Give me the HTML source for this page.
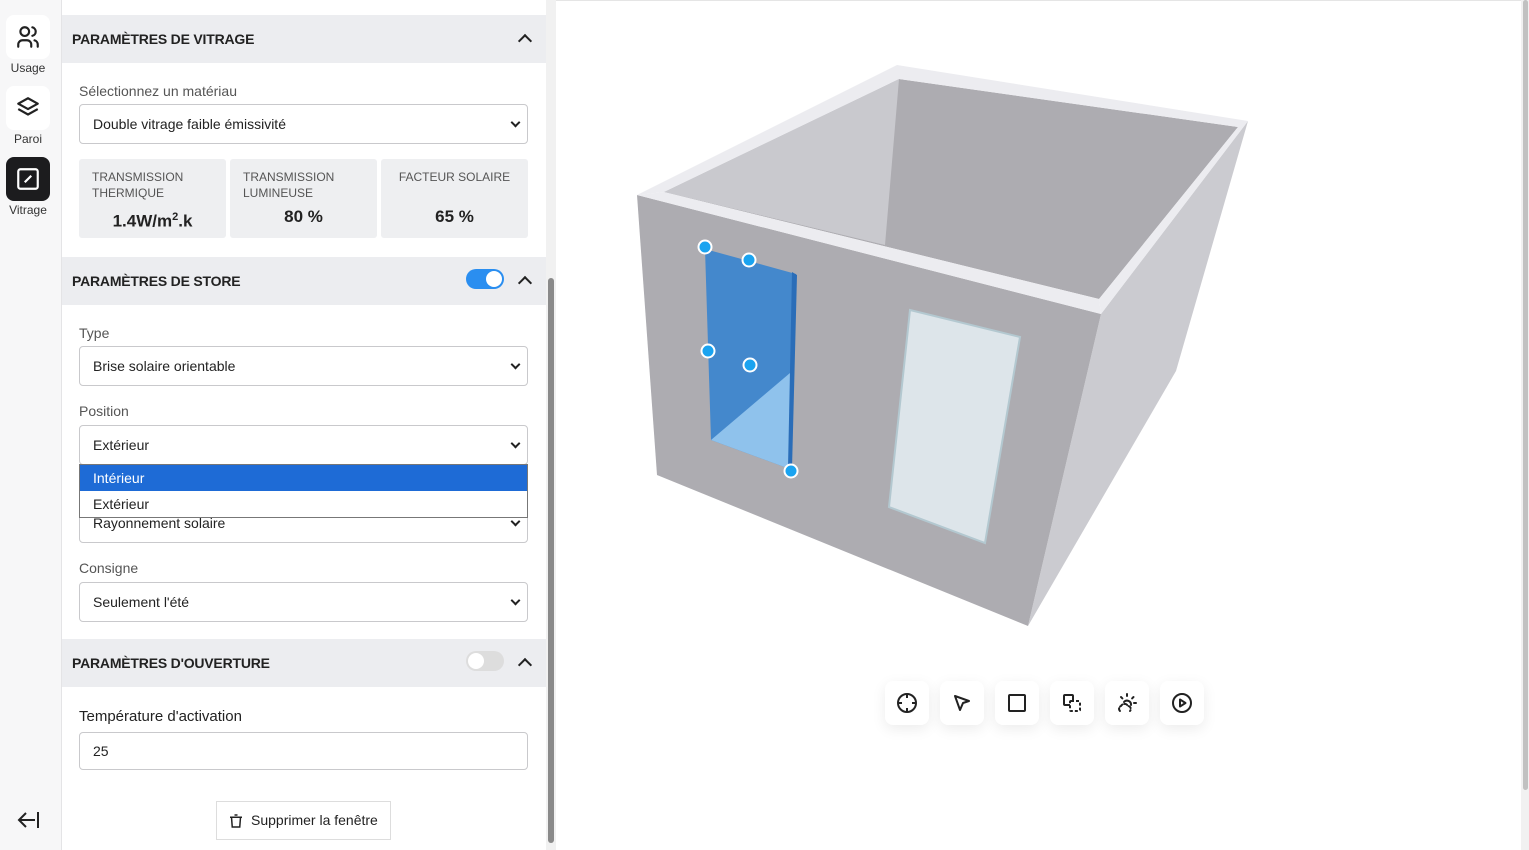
<!DOCTYPE html>
<html><head><meta charset="utf-8"><style>
*{box-sizing:border-box;margin:0;padding:0}
body{width:1529px;height:850px;overflow:hidden;font-family:"Liberation Sans",sans-serif;background:#fff;position:relative;color:#222}
.side{position:absolute;left:0;top:0;width:62px;height:850px;background:#f7f7f8;border-right:1px solid #e4e4e6}
.sb{position:absolute;left:6px;width:44px;height:44px;border-radius:8px;background:#fff;display:flex;align-items:center;justify-content:center}
.sl{position:absolute;width:56px;text-align:center;font-size:12px;color:#333}
.panel{position:absolute;left:62px;top:0;width:484px;height:850px;background:#fff}
.hd{position:absolute;left:0;width:484px;height:48px;background:#ecedf0;font-weight:bold;font-size:14px;padding-left:10px;line-height:48px;color:#222;letter-spacing:-0.2px}
.lbl{position:absolute;left:17px;font-size:14px;color:#555}
.sel,.inp{position:absolute;left:17px;width:449px;height:40px;border:1px solid #c9c9cc;border-radius:4px;font-size:14px;padding-left:13px;line-height:38px;color:#222}
.sel:after{content:"";position:absolute;right:8px;top:14px;width:5px;height:5px;border-right:2px solid #222;border-bottom:2px solid #222;transform:rotate(45deg)}
.card{position:absolute;top:159px;width:147px;height:79px;background:#eeeff1;border-radius:3px;font-size:12px;color:#555;padding:10px 13px;line-height:16px}
.card b{position:absolute;left:0;right:0;top:50px;text-align:center;font-size:17px;color:#222}
.chev{position:absolute;right:16px;width:10px;height:10px;border-left:2px solid #222;border-top:2px solid #222;transform:rotate(45deg)}
.tg{position:absolute;width:38px;height:20px;border-radius:10px}
.tg i{position:absolute;top:2px;width:16px;height:16px;border-radius:50%;background:#fff}
.tool{position:absolute;top:681px;width:44px;height:44px;border-radius:8px;background:#fff;box-shadow:0 4px 14px rgba(0,0,0,.08);display:flex;align-items:center;justify-content:center}
</style></head><body>
<div class="side">
 <div class="sb" style="top:15px"><svg width="26" height="26" viewBox="0 0 24 24" fill="none" stroke="#222" stroke-width="2" stroke-linecap="round"><circle cx="9" cy="7" r="4"/><path d="M3 21v-2a4 4 0 0 1 4-4h4a4 4 0 0 1 4 4v2M16 3.1a4 4 0 0 1 0 7.8M21 21v-2a4 4 0 0 0-3-3.9"/></svg></div>
 <div class="sl" style="top:61px;left:0">Usage</div>
 <div class="sb" style="top:86px"><svg width="26" height="26" viewBox="0 0 24 24" fill="none" stroke="#222" stroke-width="2" stroke-linejoin="round"><path d="M12 3 3 8l9 5 9-5z"/><path d="M3 13l9 5 9-5"/></svg></div>
 <div class="sl" style="top:132px;left:0">Paroi</div>
 <div class="sb" style="top:157px;background:#1c1c1e"><svg width="26" height="26" viewBox="0 0 24 24" fill="none" stroke="#fff" stroke-width="2"><rect x="3" y="3" width="18" height="18" rx="2"/><path d="M9 15l6-6"/></svg></div>
 <div class="sl" style="top:203px;left:0">Vitrage</div>
 <svg style="position:absolute;left:16px;top:809px" width="26" height="22" viewBox="0 0 26 22" fill="none" stroke="#222" stroke-width="2"><path d="M22 3v16M19 11H3M10 4l-7 7 7 7"/></svg>
</div>
<div class="panel">
 <div class="hd" style="top:15px">PARAMÈTRES DE VITRAGE<span class="chev" style="top:21px"></span></div>
 <div class="lbl" style="top:83px">Sélectionnez un matériau</div>
 <div class="sel" style="top:104px">Double vitrage faible émissivité</div>
 <div class="card" style="left:17px">TRANSMISSION<br>THERMIQUE<b>1.4W/m<sup style="font-size:11px">2</sup>.k</b></div>
 <div class="card" style="left:168px">TRANSMISSION<br>LUMINEUSE<b>80 %</b></div>
 <div class="card" style="left:319px;text-align:center">FACTEUR SOLAIRE<b>65 %</b></div>
 <div class="hd" style="top:257px">PARAMÈTRES DE STORE<span class="tg" style="right:42px;top:12px;background:#2a8ef0"><i style="right:2px"></i></span><span class="chev" style="top:21px"></span></div>
 <div class="lbl" style="top:325px">Type</div>
 <div class="sel" style="top:346px">Brise solaire orientable</div>
 <div class="lbl" style="top:403px">Position</div>
 <div class="sel" style="top:425px">Extérieur</div>
 <div class="sel" style="top:503px;line-height:40px;height:40px"><span style="position:relative;top:-1px">Rayonnement solaire</span></div>
 <div style="position:absolute;left:17px;top:464px;width:449px;height:54px;border:1px solid #777;background:#fff;font-size:14px">
  <div style="height:26px;background:#1e6bd6;color:#fff;padding-left:13px;line-height:26px">Intérieur</div>
  <div style="height:26px;padding-left:13px;line-height:26px">Extérieur</div>
 </div>
 <div class="lbl" style="top:560px">Consigne</div>
 <div class="sel" style="top:582px">Seulement l'été</div>
 <div class="hd" style="top:639px">PARAMÈTRES D'OUVERTURE<span class="tg" style="right:42px;top:12px;background:#ddd"><i style="left:2px"></i></span><span class="chev" style="top:21px"></span></div>
 <div class="lbl" style="top:708px;font-size:15px;color:#222">Température d'activation</div>
 <div class="inp" style="top:732px;height:38px;line-height:36px">25</div>
 <div style="position:absolute;left:154px;top:801px;width:175px;height:39px;border:1px solid #ddd;font-size:14px;line-height:37px;padding-left:34px">Supprimer la fenêtre
  <svg style="position:absolute;left:10px;top:10px" width="18" height="18" viewBox="0 0 24 24" fill="none" stroke="#222" stroke-width="2"><path d="M4 7h16M10 4h4M6 7l1 13h10l1-13"/></svg></div>
</div>
<div style="position:absolute;left:546px;top:0;width:10px;height:850px;background:#f1f1f1"></div>
<div style="position:absolute;left:548px;top:278px;width:6px;height:565px;background:#8a8a8a;border-radius:3px"></div>
<div style="position:absolute;left:556px;top:0;width:973px;height:1px;background:#e5e5e5"></div>
<div style="position:absolute;left:1521px;top:0;width:8px;height:850px;background:#f1f1f1"></div>
<div style="position:absolute;left:1523px;top:0;width:5px;height:790px;background:#c1c1c1;border-radius:3px"></div>
<svg style="position:absolute;left:0;top:0" width="1529" height="850">
 <polygon points="1248,121 1101,314 1028,626 1176,371" fill="#cbcbd0"/>
 <polygon points="637,195 1101,314 1028,626 657,475" fill="#adacb1"/>
 <polygon points="664,192 899,79 1238,127 1099,299" fill="#adacb1"/>
 <polygon points="664,192 899,79 885,245" fill="#c9c9ce"/>
 <polygon points="637,195 897,65 1248,121 1101,314 1099,299 1238,127 899,79 664,192" fill="#ececf0"/>
 <polygon points="637,195 664,192 1099,299 1101,314" fill="#ececf0"/>
 <polygon points="705,249 796,274 790,469 711,440" fill="#4488cc"/>
 <polygon points="711,440 790,469 790,373" fill="#8fc2ec"/>
 <polygon points="792,272 797,275 792,469 788,468" fill="#2a6db8"/>
 <polygon points="910,310 1020,337 985,543 889,507" fill="#dde5ea" stroke="#b3c8d0" stroke-width="2"/>
 <g fill="#1aa3f0" stroke="#fff" stroke-width="2"><circle cx="705" cy="247" r="6.5"/><circle cx="749" cy="260" r="6.5"/><circle cx="708" cy="351" r="6.5"/><circle cx="750" cy="365" r="6.5"/><circle cx="791" cy="471" r="6.5"/></g>
</svg>
<div class="tool" style="left:885px"><svg width="24" height="24" viewBox="0 0 24 24" fill="none" stroke="#222" stroke-width="2"><circle cx="12" cy="12" r="9"/><path d="M12 3v4M12 17v4M3 12h4M17 12h4"/></svg></div>
<div class="tool" style="left:940px"><svg width="24" height="24" viewBox="0 0 24 24" fill="none" stroke="#222" stroke-width="2" stroke-linejoin="round"><path d="M5 5l14 5-6 2-3 7z"/></svg></div>
<div class="tool" style="left:995px"><svg width="24" height="24" viewBox="0 0 24 24" fill="none" stroke="#222" stroke-width="2"><rect x="4" y="4" width="16" height="16" rx="1"/></svg></div>
<div class="tool" style="left:1050px"><svg width="24" height="24" viewBox="0 0 24 24" fill="none" stroke="#222" stroke-width="2"><path d="M10 14H5a1 1 0 0 1-1-1V5a1 1 0 0 1 1-1h7a1 1 0 0 1 1 1v5"/><rect x="10" y="10" width="10" height="10" rx="1" stroke-dasharray="3 2"/></svg></div>
<div class="tool" style="left:1105px"><svg width="24" height="24" viewBox="0 0 24 24" fill="none" stroke="#222" stroke-width="2" stroke-linecap="round"><path d="M12 3v2M18.5 6l-1.4 1.4M21 12h-2M6 6l1.4 1.4"/><path d="M9 11a4 4 0 0 1 7 3"/><path d="M5 20a3 3 0 0 1 1-5 4 4 0 0 1 7 0 3 3 0 0 1 2 5" stroke-dasharray="3 2"/></svg></div>
<div class="tool" style="left:1160px"><svg width="24" height="24" viewBox="0 0 24 24" fill="none" stroke="#222" stroke-width="2" stroke-linejoin="round"><circle cx="12" cy="12" r="9"/><path d="M10 8.5v7l5.5-3.5z"/></svg></div>
</body></html>
